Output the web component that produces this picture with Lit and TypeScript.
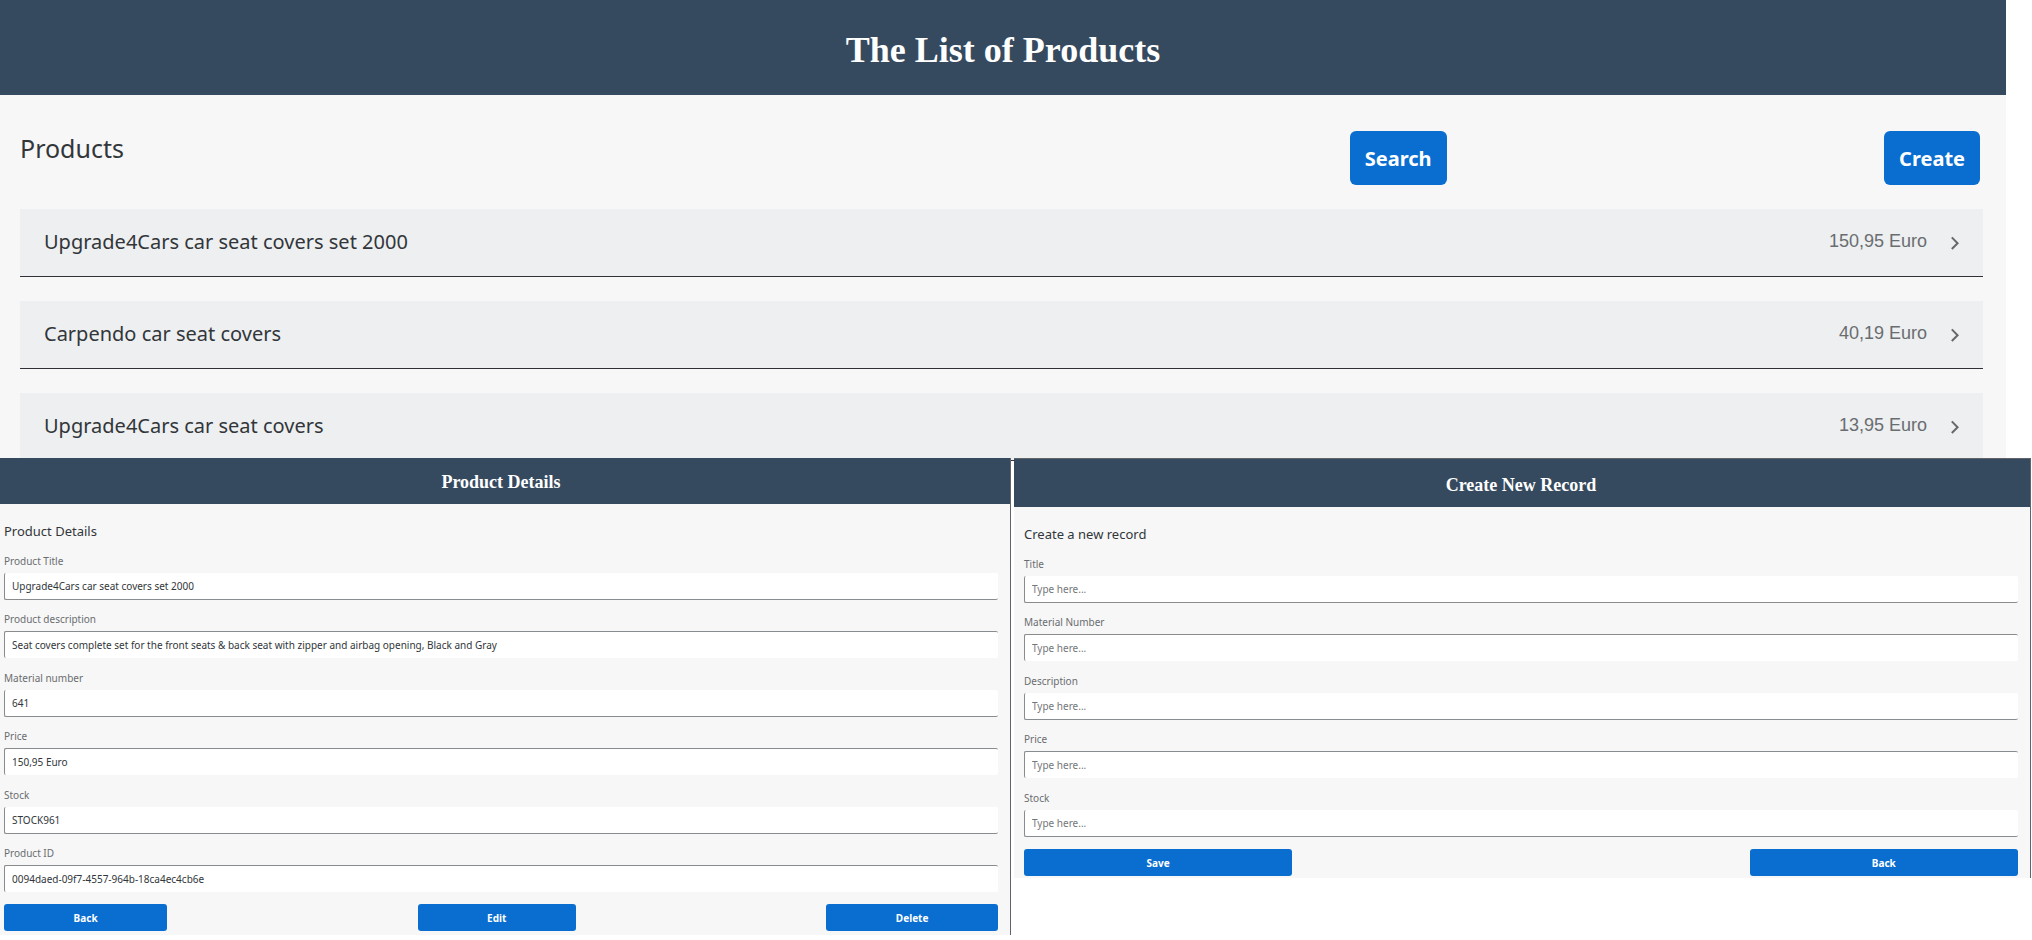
import { LitElement, html, css } from "lit";
import { customElement, property } from "lit/decorators.js";

interface Product {
  title: string;
  price: string;
}

interface Field {
  id: string;
  label: string;
  value?: string;
}

const PRODUCTS: Product[] = [
  { title: "Upgrade4Cars car seat covers set 2000", price: "150,95 Euro" },
  { title: "Carpendo car seat covers", price: "40,19 Euro" },
  { title: "Upgrade4Cars car seat covers", price: "13,95 Euro" },
];

const DETAIL_FIELDS: Field[] = [
  { id: "title", label: "Product Title", value: "Upgrade4Cars car seat covers set 2000" },
  {
    id: "description",
    label: "Product description",
    value:
      "Seat covers complete set for the front seats & back seat with zipper and airbag opening, Black and Gray",
  },
  { id: "material", label: "Material number", value: "641" },
  { id: "price", label: "Price", value: "150,95 Euro" },
  { id: "stock", label: "Stock", value: "STOCK961" },
  { id: "product-id", label: "Product ID", value: "0094daed-09f7-4557-964b-18ca4ec4cb6e" },
];

const CREATE_FIELDS: Field[] = [
  { id: "title", label: "Title" },
  { id: "material", label: "Material Number" },
  { id: "description", label: "Description" },
  { id: "price", label: "Price" },
  { id: "stock", label: "Stock" },
];

const shared = css`
  *,
  *::before,
  *::after {
    box-sizing: border-box;
  }
  h1,
  h2,
  p {
    margin: 0;
  }
  .bar {
    background: #354a5f;
    color: #fff;
    text-align: center;
  }
  .bar-title {
    font-family: "Liberation Serif", serif;
    font-weight: 700;
  }
  .button {
    border: 0;
    background: #0a6ed1;
    color: #fff;
    font-family: "Noto Sans", sans-serif;
    font-weight: 700;
    cursor: pointer;
  }
`;

@customElement("product-list")
export class ProductList extends LitElement {
  static styles = [
    shared,
    css`
      :host {
        display: block;
        background: #f7f7f7;
        color: #32363a;
        font-family: "Noto Sans", sans-serif;
      }
      .bar {
        padding: 29px 0 24px;
      }
      .bar-title {
        font-size: 36px;
        line-height: 42px;
      }
      .content {
        padding: 36px 23px 0 20px;
      }
      .toolbar {
        display: grid;
        grid-template-columns: 2.11fr 1fr;
        margin-right: 3px;
      }
      .heading {
        font-size: 25px;
        line-height: 34px;
        font-weight: 400;
      }
      .actions {
        display: flex;
        justify-content: space-between;
      }
      .button {
        height: 54px;
        padding: 0 15px;
        border-radius: 6px;
        font-size: 20px;
      }
      .list {
        display: flex;
        flex-direction: column;
        gap: 24px;
        margin: 24px 0 0;
        padding: 0;
        list-style: none;
      }
      .row {
        display: flex;
        align-items: center;
        gap: 24px;
        padding: 19px 24px 21px;
        border-bottom: 1px solid #2f3136;
        background: #edeff0;
        color: inherit;
        font-size: 20px;
        line-height: 27px;
        text-decoration: none;
      }
      .title {
        flex: 1;
      }
      .price {
        color: #6a6d70;
        font-family: "Liberation Sans", sans-serif;
        font-size: 18px;
      }
      .chevron {
        width: 8px;
        height: 18px;
        fill: none;
        stroke: #66696c;
        stroke-width: 2;
      }
    `,
  ];

  render() {
    return html`
      <header class="bar"><h1 class="bar-title">The List of Products</h1></header>
      <div class="content">
        <div class="toolbar">
          <h2 class="heading">Products</h2>
          <div class="actions">
            <button class="button" type="button">Search</button>
            <button class="button" type="button">Create</button>
          </div>
        </div>
        <ul class="list">
          ${PRODUCTS.map(
            (p) => html`<li>
              <a class="row" href="#details">
                <span class="title">${p.title}</span>
                <span class="price">${p.price}</span>
                <svg class="chevron" viewBox="0 0 8 18" aria-hidden="true">
                  <path d="M0.8 4.4 L6.6 10.2 L0.8 16" />
                </svg>
              </a>
            </li>`,
          )}
        </ul>
      </div>
    `;
  }
}

@customElement("record-form")
export class RecordForm extends LitElement {
  @property() barTitle = "";
  @property() heading = "";
  @property({ attribute: false }) fields: Field[] = [];
  @property({ attribute: false }) buttons: string[] = [];
  @property({ reflect: true }) variant: "details" | "create" = "details";

  static styles = [
    shared,
    css`
      :host {
        display: block;
        background: #f7f7f7;
        color: #32363a;
        border-right: 1px solid #606468;
        font-family: "Noto Sans", sans-serif;
      }
      :host([variant="create"]) {
        border-top: 1px solid #606468;
      }
      .bar {
        padding: 14px 8px 12px 0;
      }
      :host([variant="create"]) .bar {
        padding: 16px 2px 12px 0;
      }
      .bar-title {
        font-size: 18px;
        line-height: 20px;
      }
      .form {
        padding: 17px 12px 4px 4px;
      }
      :host([variant="create"]) .form {
        padding: 17px 12px 2px 10px;
      }
      .heading {
        margin-bottom: 12px;
        font-size: 13px;
        line-height: 20px;
        font-weight: 400;
      }
      .field {
        display: flex;
        flex-direction: column;
        gap: 4px;
        padding-bottom: 11px;
      }
      .field:nth-child(even) {
        padding-bottom: 12px;
      }
      .fields .field:last-child {
        padding-bottom: 12px;
      }
      .label {
        color: #6a6d70;
        font-size: 10px;
        line-height: 16px;
      }
      .input {
        width: 100%;
        height: 27px;
        padding: 0 7px;
        border: 0 solid #898c8f;
        border-width: 0 0 1px 1px;
        border-radius: 2px;
        outline: none;
        background: #fff;
        color: #32363a;
        font-family: inherit;
        font-size: 10px;
      }
      .field:nth-child(even) .input {
        border-width: 1px 0 0 1px;
      }
      .input::placeholder {
        color: #74777a;
        opacity: 1;
      }
      .footer {
        display: flex;
        justify-content: space-between;
      }
      .button {
        height: 27px;
        padding: 0 7%;
        border-radius: 3px;
        font-size: 10px;
      }
      :host([variant="create"]) .button {
        width: 27%;
      }
    `,
  ];

  render() {
    return html`
      <header class="bar"><h1 class="bar-title">${this.barTitle}</h1></header>
      <form class="form" @submit=${(e: Event) => e.preventDefault()}>
        <h2 class="heading">${this.heading}</h2>
        <div class="fields">
          ${this.fields.map(
            (f) => html`<div class="field">
              <label class="label" for=${f.id}>${f.label}</label>
              <input
                class="input"
                id=${f.id}
                type="text"
                placeholder="Type here..."
                spellcheck="false"
                .value=${f.value ?? ""}
              />
            </div>`,
          )}
        </div>
        <div class="footer">
          ${this.buttons.map((b) => html`<button class="button" type="button">${b}</button>`)}
        </div>
      </form>
    `;
  }
}

@customElement("app-root")
export class AppRoot extends LitElement {
  static styles = css`
    :host {
      display: block;
      min-height: 100vh;
      background: #fff;
    }
    .products {
      margin-right: 26px;
    }
    /* The forms sit slightly over the lower edge of the list. */
    .forms {
      position: relative;
      display: grid;
      grid-template-columns: 1011fr 1017fr;
      column-gap: 3px;
      align-items: start;
      margin-top: -3px;
      padding-right: 1px;
    }
  `;

  render() {
    return html`
      <product-list class="products"></product-list>
      <div class="forms">
        <record-form
          variant="details"
          .barTitle=${"Product Details"}
          .heading=${"Product Details"}
          .fields=${DETAIL_FIELDS}
          .buttons=${["Back", "Edit", "Delete"]}
        ></record-form>
        <record-form
          variant="create"
          .barTitle=${"Create New Record"}
          .heading=${"Create a new record"}
          .fields=${CREATE_FIELDS}
          .buttons=${["Save", "Back"]}
        ></record-form>
      </div>
    `;
  }
}
